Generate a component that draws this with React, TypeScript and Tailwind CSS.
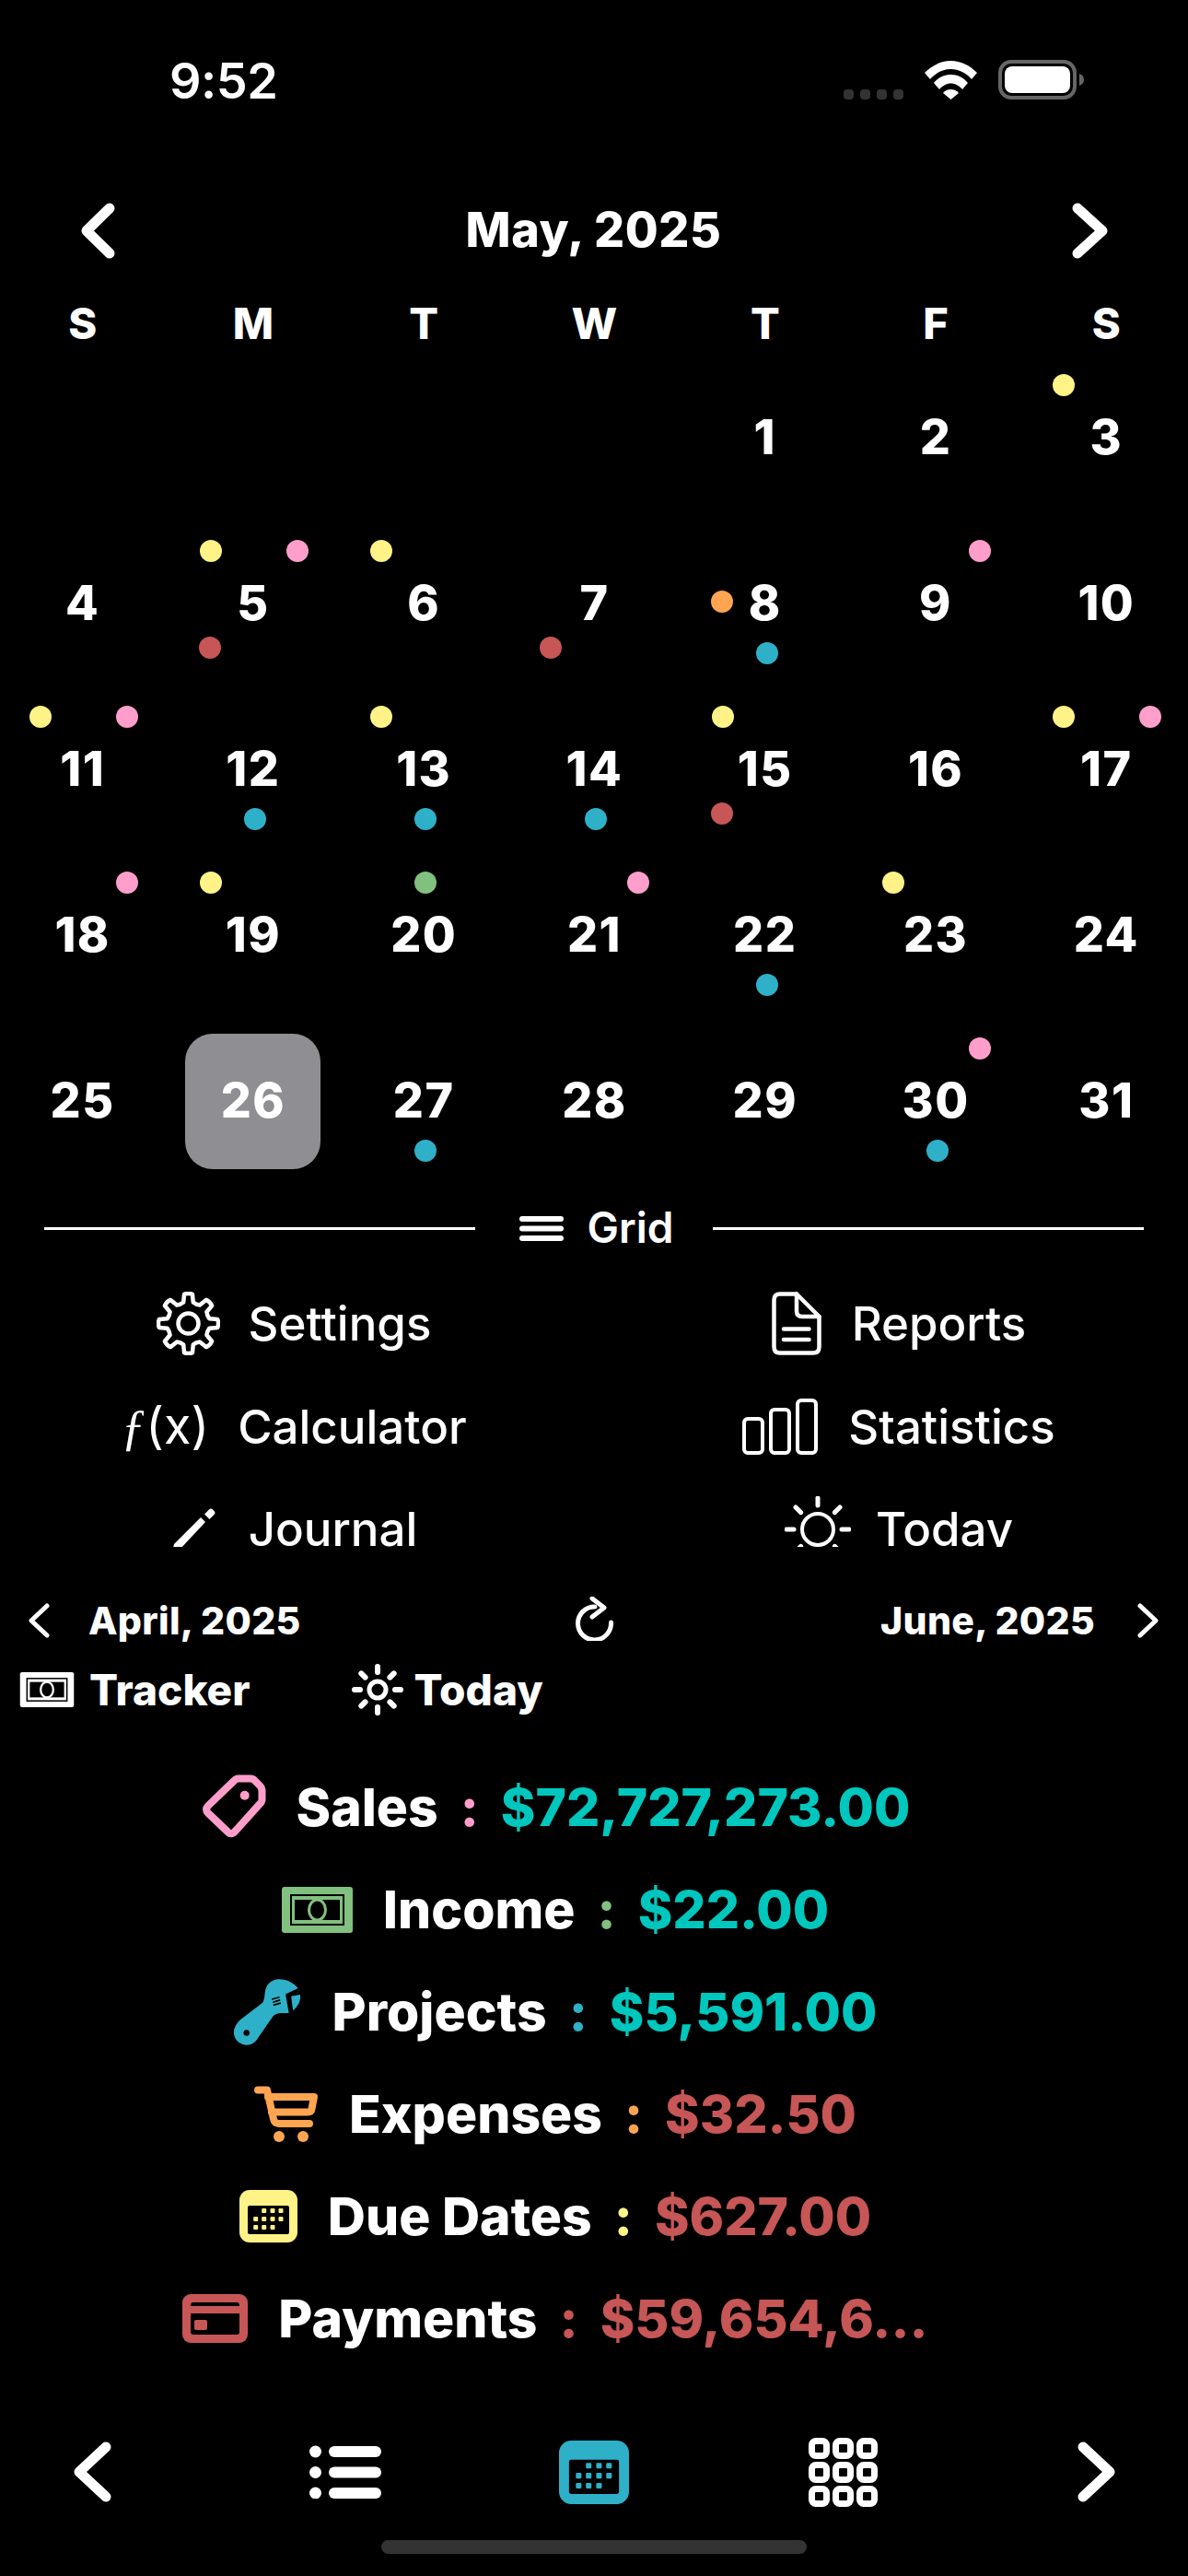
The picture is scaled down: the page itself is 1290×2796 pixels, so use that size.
import React from "react";

type DotPos = "tl" | "tr" | "tc" | "ml" | "bl" | "bc";
type DotCol = "y" | "p" | "r" | "b" | "o" | "g";

const posClass: Record<DotPos, string> = {
  tl: "left-[calc(50%-58px)] top-[21px]",
  tr: "left-[calc(50%+36px)] top-[21px]",
  tc: "left-[calc(50%-10px)] top-[21px]",
  ml: "left-[calc(50%-59px)] top-[76px]",
  bl: "left-[calc(50%-59px)] top-[126px]",
  bc: "left-[calc(50%-10px)] top-[132px]",
};
const colClass: Record<DotCol, string> = {
  y: "bg-[#fff387]",
  p: "bg-[#ff9ecb]",
  r: "bg-[#c75656]",
  b: "bg-[#2fb0c9]",
  o: "bg-[#ffa552]",
  g: "bg-[#82c07f]",
};

const dots: Record<number, [DotPos, DotCol][]> = {
  3: [["tl", "y"]],
  5: [["tl", "y"], ["tr", "p"], ["bl", "r"]],
  6: [["tl", "y"]],
  7: [["bl", "r"]],
  8: [["ml", "o"], ["bc", "b"]],
  9: [["tr", "p"]],
  11: [["tl", "y"], ["tr", "p"]],
  12: [["bc", "b"]],
  13: [["tl", "y"], ["bc", "b"]],
  14: [["bc", "b"]],
  15: [["tl", "y"], ["bl", "r"]],
  17: [["tl", "y"], ["tr", "p"]],
  18: [["tr", "p"]],
  19: [["tl", "y"]],
  20: [["tc", "g"]],
  21: [["tr", "p"]],
  22: [["bc", "b"]],
  23: [["tl", "y"]],
  27: [["bc", "b"]],
  30: [["tr", "p"], ["bc", "b"]],
};

const Chevron = ({ dir, w, h, sw, className = "" }: { dir: "l" | "r"; w: number; h: number; sw: number; className?: string }) => {
  const a = sw / 2 + 0.5;
  const d = dir === "l" ? `M${w - a} ${a} L${a} ${h / 2} L${w - a} ${h - a}` : `M${a} ${a} L${w - a} ${h / 2} L${a} ${h - a}`;
  return (
    <svg width={w} height={h} viewBox={`0 0 ${w} ${h}`} fill="none" className={className}>
      <path d={d} stroke="#fff" strokeWidth={sw} strokeLinecap="round" strokeLinejoin="round" />
    </svg>
  );
};

const Wifi = () => (
  <svg width="57" height="42" viewBox="0 0 57 42" fill="#fff">
    <path d="M0 13C8 5 18 0 28.500 0C39 0 49 5 57 13L51 20C45 13 37 9 28.500 9C20 9 12 13 6 20Z" />
    <path d="M10 24C15 18 21 15 28.500 15C36 15 42 18 47 24L41 31C37.500 27 33 24.500 28.500 24.500C24 24.500 19.500 27 16 31Z" />
    <path d="M20 35C22 32.500 25 31 28.500 31C32 31 35 32.500 37 35L28.500 42Z" />
  </svg>
);

const Battery = () => (
  <svg width="93" height="43" viewBox="0 0 93 43" fill="none">
    <rect x="2" y="2" width="81" height="39" rx="12" stroke="#666" strokeWidth="4" />
    <rect x="7" y="7" width="71" height="29" rx="8" fill="#fff" />
    <path d="M88 15C91 16 93 18.500 93 21.500C93 24.500 91 27 88 28Z" fill="#666" />
  </svg>
);

const gearPath = () => {
  const cx = 34.5, cy = 34.5;
  const pt = (r: number, deg: number) => {
    const t = (deg * Math.PI) / 180;
    return `${(cx + r * Math.cos(t)).toFixed(2)} ${(cy + r * Math.sin(t)).toFixed(2)}`;
  };
  let d = "";
  for (let i = 0; i < 8; i++) {
    const a = i * 45 - 90;
    d += `${i === 0 ? "M" : "L"}${pt(23.5, a - 13)} L${pt(32, a - 8)} Q${pt(33.5, a)} ${pt(32, a + 8)} L${pt(23.5, a + 13)} Q${pt(22, a + 22.5)} `;
    d += `${pt(23.5, a + 32)} `;
  }
  return d + "Z";
};

const Gear = () => (
  <svg width="69" height="69" viewBox="0 0 69 69" fill="none" stroke="#fff" strokeWidth="4.500" strokeLinejoin="round">
    <path d={gearPath()} />
    <circle cx="34.500" cy="34.500" r="11" />
  </svg>
);

const Doc = () => (
  <svg width="54" height="69" viewBox="0 0 54 69" fill="none" stroke="#fff" strokeWidth="4.500" strokeLinecap="round" strokeLinejoin="round">
    <path d="M9 2.500H27L51.500 27V60Q51.500 66.500 45 66.500H9Q2.500 66.500 2.500 60V9Q2.500 2.500 9 2.500Z" />
    <path d="M27 2.500V21Q27 27 33 27H51.500" />
    <path d="M13 40.500H40.500M13 52H40.500" />
  </svg>
);

const Stats = () => (
  <svg width="82" height="61" viewBox="0 0 82 61" fill="none" stroke="#fff" strokeWidth="4">
    <rect x="2" y="22" width="20" height="37" rx="4" />
    <rect x="31" y="12" width="20" height="47" rx="4" />
    <rect x="60" y="2" width="20" height="57" rx="4" />
  </svg>
);

const Pencil = () => (
  <svg width="51" height="49" viewBox="-2 0 51 49" fill="#fff">
    <path d="M0 49L2 41L31 12L36 17L8 47Z" />
    <path d="M35 8.500L40 3.500Q42 1.500 44 3.500L45.500 5Q47.500 7 45.500 9L40.500 14Z" />
  </svg>
);

const Sun = ({ size, r, ri, ro, sw, rsw }: { size: number; r: number; ri: number; ro: number; sw: number; rsw: number }) => {
  const c = size / 2;
  const rays = [0, 45, 90, 135, 180, 225, 270, 315].map((a) => {
    const t = (a * Math.PI) / 180;
    return `M${(c + ri * Math.cos(t)).toFixed(2)} ${(c + ri * Math.sin(t)).toFixed(2)}L${(c + ro * Math.cos(t)).toFixed(2)} ${(c + ro * Math.sin(t)).toFixed(2)}`;
  });
  return (
    <svg width={size} height={size} viewBox={`0 0 ${size} ${size}`} fill="none" stroke="#fff" strokeLinecap="round">
      <circle cx={c} cy={c} r={r} strokeWidth={sw} />
      <path d={rays.join("")} strokeWidth={rsw} />
    </svg>
  );
};

const Refresh = () => (
  <svg width="41" height="48" viewBox="0 0 41 48" fill="none" stroke="#fff" strokeWidth="5" strokeLinecap="round" strokeLinejoin="round">
    <path d="M21 11A18 18 0 1 0 38.500 28" />
    <path d="M18 2L31 12L18 22" />
  </svg>
);

const Money = ({ w, h, color }: { w: number; h: number; color: string }) => (
  <svg width={w} height={h} viewBox="0 0 77 50">
    <rect width="77" height="50" rx="3" fill={color} />
    <rect x="9" y="8" width="59" height="34" fill="#000" />
    <rect x="11" y="10" width="55" height="30" fill={color} />
    <rect x="14" y="14" width="49" height="22" fill="#000" />
    <ellipse cx="38.500" cy="25" rx="9" ry="11" fill="#000" stroke={color} strokeWidth="3" />
  </svg>
);

const Tag = () => (
  <svg width="71" height="71" viewBox="0 0 71 71" fill="none" stroke="#ff9ecb" strokeWidth="8" strokeLinejoin="round">
    <path d="M36 7Q38 4.500 41 4.500H54Q57 4.500 59 7L64 12Q66.500 14.500 66.500 18V27Q66.500 30 64 32L37 62Q33 66.500 29 62L8 42Q4 38 8 34Z" />
    <circle cx="47.700" cy="22.700" r="5" fill="#ff9ecb" stroke="none" />
  </svg>
);

const Wrench = () => (
  <svg width="74" height="75" viewBox="310 738 228 232">
    <path d="M528 775C505 745 450 730 425 765C412 785 420 810 408 825L335 880C305 905 305 945 335 960C360 975 385 960 395 940L445 868C460 855 485 860 497 858L486 795Z" fill="#2fb0c9" />
    <path d="M505 802L535 797C538 815 530 835 511 850Z" fill="#2fb0c9" />
    <circle cx="355" cy="925" r="10" fill="#000" />
    <path d="M440 812L466 805M443 822L468 815M445 832L470 825" stroke="#000" strokeWidth="5" />
  </svg>
);

const Cart = () => (
  <svg width="70" height="62" viewBox="0 0 70 62" fill="none" stroke="#ffa552" strokeWidth="8" strokeLinecap="round" strokeLinejoin="round">
    <path d="M4 4.500H14L21 36Q22 41 27 41H60" />
    <path d="M15 12H65L62.500 25Q62 28.500 58 28.500H19" />
    <circle cx="27" cy="55" r="6" fill="#ffa552" stroke="none" />
    <circle cx="53" cy="55" r="6" fill="#ffa552" stroke="none" />
  </svg>
);

const CalendarIcon = ({ w, h, color }: { w: number; h: number; color: string }) => {
  const xs = [17.7, 26.7, 36, 45];
  const cells: [number, number][] = [
    [1, 0], [2, 0], [3, 0],
    [0, 1], [1, 1], [2, 1], [3, 1],
    [0, 2], [1, 2], [2, 2],
  ];
  const ys = [23, 32, 41];
  return (
    <svg width={w} height={h} viewBox="0 0 63 57">
      <rect width="63" height="57" rx="11" fill={color} />
      <rect x="9" y="17" width="45" height="31" rx="2" fill="#000" />
      {cells.map(([c, r]) => (
        <rect key={`${c}-${r}`} x={xs[c] - 2.5} y={ys[r] - 1 - 2} width="5" height="5" rx="1" fill={color} />
      ))}
    </svg>
  );
};

const Card = () => (
  <svg width="71" height="53" viewBox="0 0 71 53">
    <rect width="71" height="53" rx="9" fill="#c75656" />
    <path d="M9 13V12Q9 9 12 9H59Q62 9 62 12V13Z" fill="#000" />
    <path d="M9 21H62V41Q62 44 59 44H12Q9 44 9 41Z" fill="#000" />
    <rect x="13" y="28" width="14" height="11" rx="2" fill="#c75656" />
  </svg>
);

const ListIcon = () => (
  <svg width="78" height="58" viewBox="0 0 78 58" fill="#fff">
    {[7, 29.500, 52].map((y) => (
      <g key={y}>
        <circle cx="6.500" cy={y} r="6.500" />
        <rect x="21" y={y - 6} width="57" height="12" rx="6" />
      </g>
    ))}
  </svg>
);

const GridIcon = () => (
  <svg width="75" height="75" viewBox="0 0 75 75" fill="none" stroke="#fff" strokeWidth="7">
    {[0, 26, 52].map((y) =>
      [0, 26, 52].map((x) => <rect key={`${x}-${y}`} x={x + 3.5} y={y + 3.5} width="16" height="16" rx="4.500" />)
    )}
  </svg>
);

const Bars = () => (
  <svg width="48" height="27" viewBox="0 0 48 27" fill="#fff">
    <rect y="0" width="48" height="6" rx="3" />
    <rect y="10.500" width="48" height="6" rx="3" />
    <rect y="21" width="48" height="6" rx="3" />
  </svg>
);

const MenuItem = ({ icon, label, gap }: { icon: React.ReactNode; label: string; gap: string }) => (
  <div className={`h-[111.5px] flex items-center justify-center shrink-0 ${gap}`}>
    <span className="flex items-center justify-center">{icon}</span>
    <span className="text-[51px] leading-none font-medium">{label}</span>
  </div>
);

const SummaryRow = ({ icon, label, amount, colon, amt }: { icon: React.ReactNode; label: string; amount: string; colon: string; amt: string }) => (
  <div className="h-[111px] flex items-center justify-center gap-[33px]">
    <span className="flex items-center justify-center shrink-0">{icon}</span>
    <div className="flex items-center gap-[24px] text-[57px] leading-none font-extrabold">
      <span>{label}</span>
      <span className={colon}>:</span>
      <span className={amt}>{amount}</span>
    </div>
  </div>
);

export default function App() {
  const week = ["S", "M", "T", "W", "T", "F", "S"];
  const days: (number | null)[] = [null, null, null, null, ...Array.from({ length: 31 }, (_, i) => i + 1)];
  return (
    <div className="w-[1290px] h-[2796px] bg-black text-white overflow-hidden flex flex-col font-['Inter',sans-serif]">
      {/* status bar */}
      <div className="h-[176px] shrink-0 flex items-start">
        <div className="ml-[184px] mt-[59px] text-[54px] leading-[58px] font-semibold tracking-[-0.5px]">9:52</div>
        <div className="ml-auto mr-[113px] mt-[65px] flex items-end">
          <div className="flex gap-[7px] mb-0 mr-[23px]">
            <span className="w-[11px] h-[11px] rounded-[4px] bg-[#333]" />
            <span className="w-[11px] h-[11px] rounded-[4px] bg-[#333]" />
            <span className="w-[11px] h-[11px] rounded-[4px] bg-[#333]" />
            <span className="w-[11px] h-[11px] rounded-[4px] bg-[#333]" />
          </div>
          <Wifi />
          <span className="ml-[23px]"><Battery /></span>
        </div>
      </div>

      {/* month header */}
      <div className="h-[148px] shrink-0 flex items-center justify-between pl-[88px] pr-[87px]">
        <Chevron dir="l" w={37} h={61} sw={11} />
        <div className="text-[52px] leading-none font-extrabold tracking-[0.6px]">May, 2025</div>
        <Chevron dir="r" w={39} h={61} sw={11} />
      </div>

      {/* weekdays */}
      <div className="w-[1297px] -ml-[3px] shrink-0 grid grid-cols-7 h-[52px] mb-[9px] items-center text-center text-[47px] leading-none font-extrabold">
        {week.map((w, i) => (
          <div key={i}>{w}</div>
        ))}
      </div>

      {/* days */}
      <div className="w-[1297px] -ml-[3px] shrink-0 grid grid-cols-7 auto-rows-[180px] text-[52px] leading-none font-extrabold tracking-[1.5px]">
        {days.map((d, i) => (
          <div key={i} className="relative flex items-center justify-center">
            {d === null ? null : d === 26 ? (
              <span className="w-[147px] h-[147px] rounded-[30px] bg-[#8e8e93] flex items-center justify-center">{d}</span>
            ) : (
              <span>{d}</span>
            )}
            {d !== null &&
              (dots[d] || []).map(([p, c], k) => (
                <span key={k} className={`absolute w-[24px] h-[24px] rounded-full ${posClass[p]} ${colClass[c]}`} />
              ))}
          </div>
        ))}
      </div>

      {/* divider */}
      <div className="h-[96px] shrink-0 flex items-center px-[48px]">
        <div className="flex-1 h-[3px] bg-white" />
        <div className="w-[258px] pl-[5px] flex items-center justify-center gap-[26px]">
          <Bars />
          <span className="text-[46px] leading-none font-semibold mt-[-2px]">Grid</span>
        </div>
        <div className="flex-1 h-[3px] bg-white" />
      </div>

      {/* scrolling menu */}
      <div className="h-[298px] shrink-0 overflow-hidden flex">
        <div className="w-[640px] flex flex-col">
          <MenuItem icon={<Gear />} label="Settings" gap="gap-[31px]" />
          <MenuItem
            icon={<span className="text-[54px] leading-none font-normal"><i className="font-['Liberation_Serif']">ƒ</i>(x)</span>}
            label="Calculator"
            gap="gap-[31px]"
          />
          <MenuItem icon={<Pencil />} label="Journal" gap="gap-[34px]" />
        </div>
        <div className="w-[630px] ml-[24px] flex flex-col">
          <MenuItem icon={<Doc />} label="Reports" gap="gap-[33px]" />
          <MenuItem icon={<Stats />} label="Statistics" gap="gap-[33px]" />
          <MenuItem icon={<Sun size={72} r={17} ri={26} ro={34} sw={4} rsw={5} />} label="Today" gap="gap-[27px]" />
        </div>
      </div>

      {/* month nav */}
      <div className="mt-[40px] h-[80px] shrink-0 flex items-center pl-[31px] pr-[32px] text-[41px] leading-none font-extrabold tracking-[0.3px]">
        <Chevron dir="l" w={23} h={38} sw={5} />
        <span className="ml-[42px]">April, 2025</span>
        <span className="ml-[298px] mt-[-4px]"><Refresh /></span>
        <span className="ml-auto">June, 2025</span>
        <span className="ml-[46px]"><Chevron dir="r" w={23} h={38} sw={5} /></span>
      </div>

      {/* tracker row */}
      <div className="h-[70px] shrink-0 flex items-center pl-[21px] text-[46px] leading-none font-extrabold">
        <Money w={60} h={38} color="#fff" />
        <span className="ml-[16px]">Tracker</span>
        <span className="ml-[110px]"><Sun size={56} r={9} ri={19} ro={25} sw={5} rsw={6} /></span>
        <span className="ml-[12px]">Today</span>
      </div>

      {/* summary */}
      <div className="mt-[37px] w-[1206px] shrink-0 flex flex-col">
        <SummaryRow icon={<Tag />} label="Sales" amount="$72,727,273.00" colon="text-[#ff9ecb]" amt="text-[#00c7be]" />
        <SummaryRow icon={<Money w={77} h={50} color="#82c07f" />} label="Income" amount="$22.00" colon="text-[#82c07f]" amt="text-[#00c7be]" />
        <SummaryRow icon={<Wrench />} label="Projects" amount="$5,591.00" colon="text-[#2fb0c9]" amt="text-[#00c7be]" />
        <SummaryRow icon={<Cart />} label="Expenses" amount="$32.50" colon="text-[#ffa552]" amt="text-[#c75656]" />
        <SummaryRow icon={<CalendarIcon w={63} h={57} color="#fff387" />} label="Due Dates" amount="$627.00" colon="text-[#fff387]" amt="text-[#c75656]" />
        <SummaryRow icon={<Card />} label="Payments" amount="$59,654,6..." colon="text-[#c75656]" amt="text-[#c75656]" />
      </div>

      {/* bottom nav */}
      <div className="mt-[56px] h-[110px] shrink-0 flex items-center pl-[80px]">
        <Chevron dir="l" w={41} h={66} sw={11} />
        <span className="ml-[215px]"><ListIcon /></span>
        <span className="ml-[193px]"><CalendarIcon w={76} h={69} color="#2fb0c9" /></span>
        <span className="ml-[195px]"><GridIcon /></span>
        <span className="ml-[217px]"><Chevron dir="r" w={41} h={66} sw={11} /></span>
      </div>

      {/* home indicator */}
      <div className="mt-[19px] mx-auto w-[462px] h-[15px] rounded-full bg-[#333] shrink-0" />
    </div>
  );
}
